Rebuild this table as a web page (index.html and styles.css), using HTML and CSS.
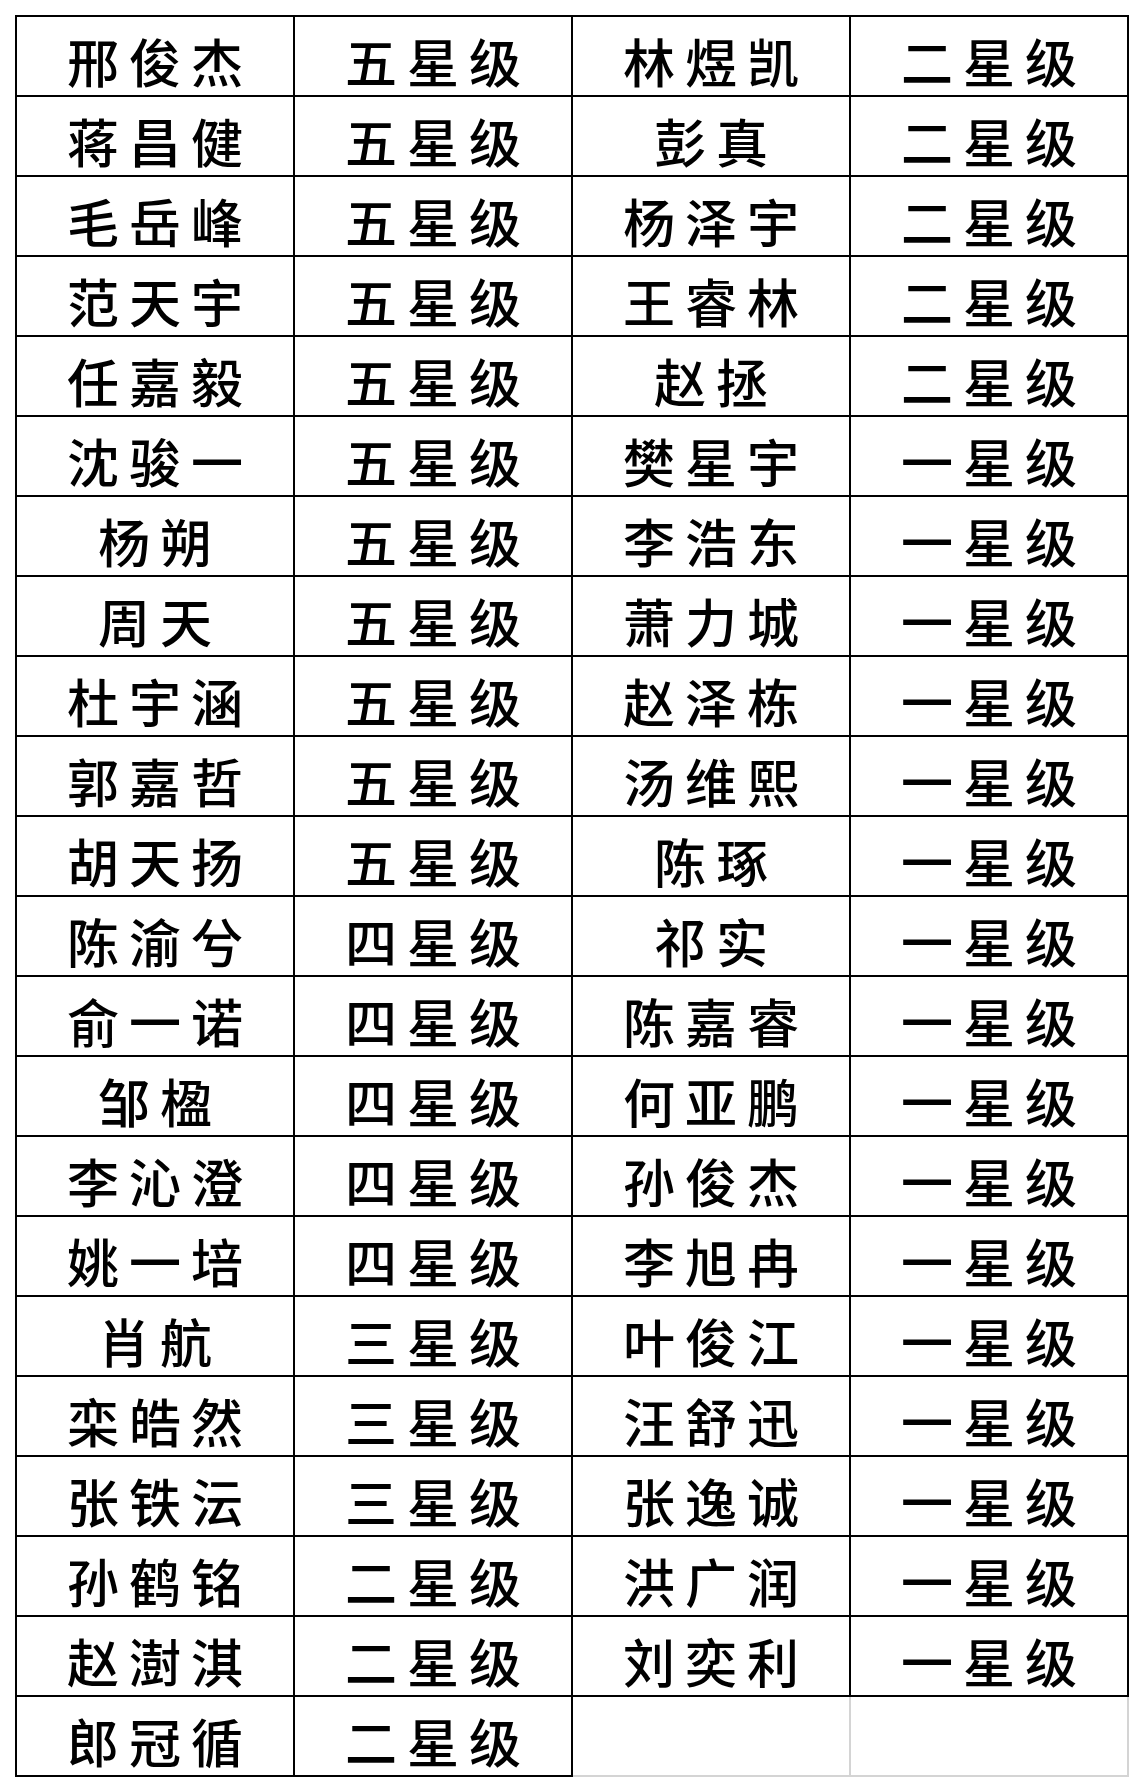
FILE: index.html
```html
<!DOCTYPE html>
<html lang="zh-CN">
<head>
<meta charset="utf-8">
<title>星级名单</title>
<link rel="stylesheet" href="styles.css">
</head>
<body>
<div class="sheet">
  <div class="cell">邢俊杰</div><div class="cell">五星级</div><div class="cell">林煜凯</div><div class="cell">二星级</div>
  <div class="cell">蒋昌健</div><div class="cell">五星级</div><div class="cell">彭真</div><div class="cell">二星级</div>
  <div class="cell">毛岳峰</div><div class="cell">五星级</div><div class="cell">杨泽宇</div><div class="cell">二星级</div>
  <div class="cell">范天宇</div><div class="cell">五星级</div><div class="cell">王睿林</div><div class="cell">二星级</div>
  <div class="cell">任嘉毅</div><div class="cell">五星级</div><div class="cell">赵拯</div><div class="cell">二星级</div>
  <div class="cell">沈骏一</div><div class="cell">五星级</div><div class="cell">樊星宇</div><div class="cell">一星级</div>
  <div class="cell">杨朔</div><div class="cell">五星级</div><div class="cell">李浩东</div><div class="cell">一星级</div>
  <div class="cell">周天</div><div class="cell">五星级</div><div class="cell">萧力城</div><div class="cell">一星级</div>
  <div class="cell">杜宇涵</div><div class="cell">五星级</div><div class="cell">赵泽栋</div><div class="cell">一星级</div>
  <div class="cell">郭嘉哲</div><div class="cell">五星级</div><div class="cell">汤维熙</div><div class="cell">一星级</div>
  <div class="cell">胡天扬</div><div class="cell">五星级</div><div class="cell">陈琢</div><div class="cell">一星级</div>
  <div class="cell">陈渝兮</div><div class="cell">四星级</div><div class="cell">祁实</div><div class="cell">一星级</div>
  <div class="cell">俞一诺</div><div class="cell">四星级</div><div class="cell">陈嘉睿</div><div class="cell">一星级</div>
  <div class="cell">邹楹</div><div class="cell">四星级</div><div class="cell">何亚鹏</div><div class="cell">一星级</div>
  <div class="cell">李沁澄</div><div class="cell">四星级</div><div class="cell">孙俊杰</div><div class="cell">一星级</div>
  <div class="cell">姚一培</div><div class="cell">四星级</div><div class="cell">李旭冉</div><div class="cell">一星级</div>
  <div class="cell">肖航</div><div class="cell">三星级</div><div class="cell">叶俊江</div><div class="cell">一星级</div>
  <div class="cell">栾皓然</div><div class="cell">三星级</div><div class="cell">汪舒迅</div><div class="cell">一星级</div>
  <div class="cell">张铁沄</div><div class="cell">三星级</div><div class="cell">张逸诚</div><div class="cell">一星级</div>
  <div class="cell">孙鹤铭</div><div class="cell">二星级</div><div class="cell">洪广润</div><div class="cell">一星级</div>
  <div class="cell">赵澍淇</div><div class="cell">二星级</div><div class="cell">刘奕利</div><div class="cell">一星级</div>
  <div class="cell">郎冠循</div><div class="cell">二星级</div><div class="cell empty"></div><div class="cell empty"></div>
</div>
</body>
</html>
```

FILE: styles.css
```css
html, body {
  margin: 0;
  padding: 0;
  background: #ffffff;
}

body {
  padding: 15px 0 0 15px;
}

.sheet {
  display: grid;
  grid-template-columns: repeat(4, 278px);
  grid-auto-rows: 80px;
  width: max-content;
  border-top: 2px solid #000;
  border-left: 2px solid #000;
}

.cell {
  box-sizing: border-box;
  border-right: 2px solid #000;
  border-bottom: 2px solid #000;
  display: flex;
  align-items: center;
  justify-content: center;
  padding-top: 10px;
  padding-left: 10px;
  font-family: "Noto Sans CJK SC", "Noto Sans CJK JP", sans-serif;
  font-size: 52px;
  font-weight: 500;
  letter-spacing: 10px;
  line-height: 1;
  color: #000;
}

.cell.empty {
  border-right: 2px solid #d4d4d4;
  border-bottom: 2px solid #d4d4d4;
}
```
